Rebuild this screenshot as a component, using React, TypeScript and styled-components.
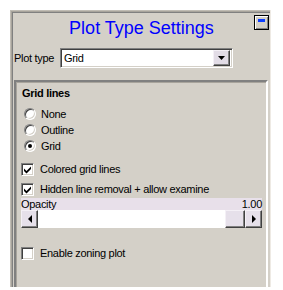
import React from "react";
import styled, { createGlobalStyle } from "styled-components";

const GlobalStyle = createGlobalStyle`
  html, body {
    margin: 0;
    padding: 0;
    background: #ffffff;
  }
  body {
    font-family: "Liberation Sans", Arial, sans-serif;
    font-size: 11px;
    letter-spacing: -0.3px;
    color: #000;
  }
`;

const Page = styled.div`
  padding: 10px 0 0 10px;
`;

const Panel = styled.div`
  box-sizing: border-box;
  width: 261px;
  height: 277px;
  background: #d4d0c8;
  display: flex;
  flex-direction: column;
  padding: 3px 0 0 3px;
  border-right: 1px solid #eeeae4;
  box-shadow: inset 1px 1px 0 #c0bcb4, inset 2px 2px 0 #a8a49c, inset 3px 3px 0 #808080;
`;

const Header = styled.div`
  display: grid;
  grid-template-columns: 1fr auto 1fr;
  height: 35px;
  padding-top: 2px;
  box-sizing: border-box;
`;

const Title = styled.h1`
  grid-column: 2;
  margin: 3px 0 0 0;
  font-family: "Liberation Sans", Arial, sans-serif;
  font-size: 18px;
  line-height: 21px;
  font-weight: normal;
  letter-spacing: 0;
  color: #0000ff;
  white-space: nowrap;
`;

const MinButton = styled.button`
  grid-column: 3;
  justify-self: end;
  align-self: start;
  width: 15px;
  height: 15px;
  margin: 0 1px 0 0;
  padding: 0;
  border: 1px solid #000;
  background: #d4d0c8;
  box-shadow: inset 1px 1px 0 #ffffff, inset -1px -1px 0 #808080;
  display: flex;
  justify-content: center;
  align-items: flex-start;
  &::after {
    content: "";
    display: block;
    width: 7px;
    height: 3px;
    margin-top: 3px;
    background: #0a3cff;
  }
`;

const FieldRow = styled.div`
  display: flex;
  align-items: center;
  height: 20px;
  padding-left: 1px;
`;

const Label = styled.span`
  width: 46px;
  font-size: 11px;
  white-space: nowrap;
`;

const Combo = styled.div`
  box-sizing: border-box;
  width: 173px;
  height: 20px;
  background: #fff;
  border: 1px solid;
  border-color: #808080 #ffffff #ffffff #808080;
  box-shadow: inset 1px 1px 0 #404040, inset -1px -1px 0 #d4d0c8;
  display: flex;
  align-items: center;
  justify-content: space-between;
  padding: 0 2px 0 3px;
`;

const ComboText = styled.span`
  font-size: 11px;
`;

const ComboButton = styled.div`
  box-sizing: border-box;
  width: 17px;
  height: 16px;
  background: #e2dce6;
  border: 1px solid;
  border-color: #f4f0f6 #404040 #404040 #f4f0f6;
  box-shadow: inset -1px -1px 0 #808080;
  display: flex;
  align-items: center;
  justify-content: center;
`;

const GroupBox = styled.div`
  flex: 1;
  box-sizing: border-box;
  margin: 12px 2px 0 1px;
  border-top: 2px solid #808080;
  border-left: 2px solid #808080;
  border-right: 2px solid #ffffff;
  box-shadow: inset 1px 1px 0 #a8a49c;
  padding: 5px 4px 0 5px;
  display: flex;
  flex-direction: column;
`;

const GroupTitle = styled.div`
  font-weight: bold;
  font-size: 11px;
  line-height: 13px;
  padding-left: 1px;
`;

const RadioList = styled.div`
  margin-top: 6px;
  display: flex;
  flex-direction: column;
`;

const OptionRow = styled.label<{ $top?: number }>`
  display: flex;
  align-items: center;
  height: 16px;
  margin-top: ${(p) => p.$top ?? 0}px;
  font-size: 11px;
  white-space: nowrap;
`;

const RadioCircle = styled.span<{ $checked?: boolean }>`
  box-sizing: border-box;
  width: 12px;
  height: 12px;
  margin: 0 5px 0 3px;
  border-radius: 50%;
  background: #fff;
  border: 1px solid;
  border-color: #808080 #ffffff #ffffff #808080;
  box-shadow: inset 1px 1px 0 #404040, inset -1px -1px 0 #d4d0c8;
  display: flex;
  align-items: center;
  justify-content: center;
  &::after {
    content: "";
    display: ${(p) => (p.$checked ? "block" : "none")};
    width: 4px;
    height: 4px;
    border-radius: 50%;
    background: #000;
  }
`;

const CheckBox = styled.span`
  box-sizing: border-box;
  width: 13px;
  height: 13px;
  margin-right: 6px;
  background: #fff;
  border: 1px solid;
  border-color: #808080 #ffffff #ffffff #808080;
  box-shadow: inset 1px 1px 0 #404040, inset -1px -1px 0 #d4d0c8;
  display: flex;
  align-items: center;
  justify-content: center;
`;

const SliderHead = styled.div`
  margin-top: 1px;
  height: 12px;
  background: #e8e0ea;
  display: flex;
  justify-content: space-between;
  align-items: center;
  font-size: 11px;
  line-height: 12px;
`;

const ScrollBar = styled.div`
  display: flex;
  height: 18px;
`;

const ArrowButton = styled.div<{ $w?: number }>`
  box-sizing: border-box;
  width: ${(p) => p.$w ?? 17}px;
  height: 18px;
  background: #e6e0ea;
  border: 1px solid;
  border-color: #f4f0f6 #404040 #404040 #f4f0f6;
  box-shadow: inset -1px -1px 0 #808080;
  display: flex;
  align-items: center;
  justify-content: center;
`;

const Track = styled.div`
  flex: 1;
  background: #ffffff;
`;

const Check = () => (
  <svg width="9" height="9" viewBox="0 0 9 9">
    <path d="M1 3.5 L3.5 6 L8 1.5 L8 4 L3.5 8.5 L1 6 Z" fill="#000" />
  </svg>
);

const Tri = ({ dir }: { dir: "left" | "right" | "down" }) => {
  if (dir === "down")
    return (
      <svg width="7" height="4" viewBox="0 0 7 4">
        <path d="M0 0 H7 L3.5 4 Z" fill="#000" />
      </svg>
    );
  return (
    <svg width="4" height="8" viewBox="0 0 4 8">
      <path d={dir === "left" ? "M4 0 V8 L0 4 Z" : "M0 0 V8 L4 4 Z"} fill="#000" />
    </svg>
  );
};

const App: React.FC = () => {
  return (
    <Page>
      <GlobalStyle />
      <Panel>
        <Header>
          <Title>Plot Type Settings</Title>
          <MinButton aria-label="Minimize" />
        </Header>
        <FieldRow>
          <Label>Plot type</Label>
          <Combo>
            <ComboText>Grid</ComboText>
            <ComboButton>
              <Tri dir="down" />
            </ComboButton>
          </Combo>
        </FieldRow>
        <GroupBox>
          <GroupTitle>Grid lines</GroupTitle>
          <RadioList>
            <OptionRow>
              <RadioCircle />
              None
            </OptionRow>
            <OptionRow>
              <RadioCircle />
              Outline
            </OptionRow>
            <OptionRow>
              <RadioCircle $checked />
              Grid
            </OptionRow>
          </RadioList>
          <OptionRow $top={7}>
            <CheckBox>
              <Check />
            </CheckBox>
            Colored grid lines
          </OptionRow>
          <OptionRow $top={4}>
            <CheckBox>
              <Check />
            </CheckBox>
            Hidden line removal + allow examine
          </OptionRow>
          <SliderHead>
            <span>Opacity</span>
            <span>1.00</span>
          </SliderHead>
          <ScrollBar>
            <ArrowButton>
              <Tri dir="left" />
            </ArrowButton>
            <Track />
            <ArrowButton $w={20} />
            <ArrowButton>
              <Tri dir="right" />
            </ArrowButton>
          </ScrollBar>
          <OptionRow $top={17}>
            <CheckBox />
            Enable zoning plot
          </OptionRow>
        </GroupBox>
      </Panel>
    </Page>
  );
};

export default App;
